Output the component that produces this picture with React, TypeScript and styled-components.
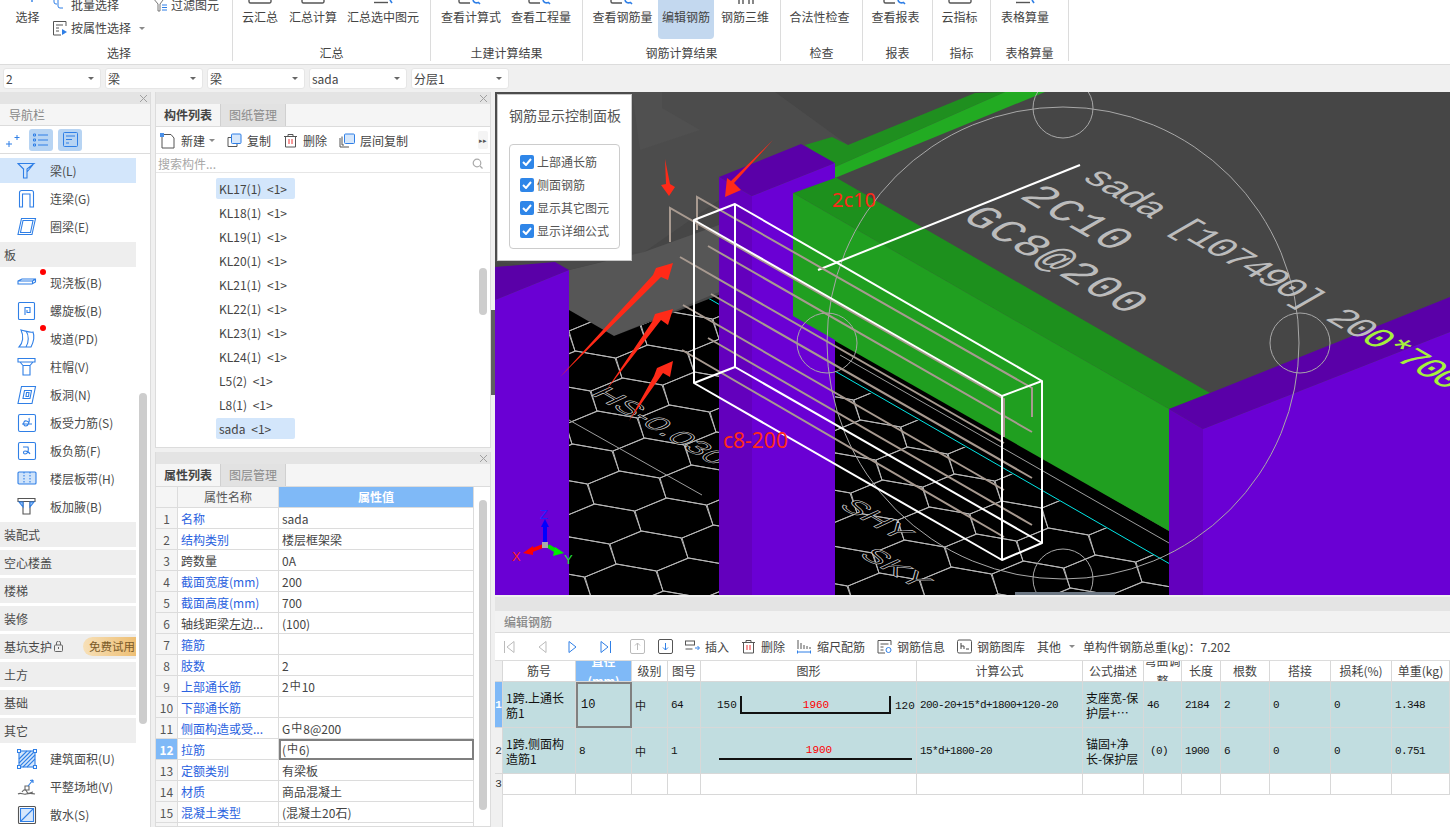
import React from "react";
import styled, { createGlobalStyle } from "styled-components";

const Global = createGlobalStyle`
  html, body { margin: 0; padding: 0; overflow: hidden; background: #f0f0f0; }
  body { font-family: "Noto Sans CJK SC", "Noto Sans", "Liberation Sans", sans-serif; font-size: 12px; color: #444; }
  * { box-sizing: border-box; }
`;
const BLUE = "#2f7fe6";

const Page = styled.div`width: 1450px; height: 827px; display: flex; flex-direction: column; overflow: hidden; background: #f0f0f0;`;

/* ---------- ribbon ---------- */
const Ribbon = styled.div`height: 65px; flex: none; background: #fff; display: flex; align-items: flex-start; border-bottom: 1px solid #dcdcdc;`;
const Group = styled.div<{ $w: number }>`width: ${p => p.$w}px; height: 61px; flex: none; border-right: 1px solid #dcdcdc; display: flex; flex-direction: column;`;
const GroupBody = styled.div<{ $pl?: number; $gap?: number; $center?: boolean }>`
  height: 39px; display: flex; padding-left: ${p => p.$pl ?? 0}px; gap: ${p => p.$gap ?? 0}px;
  ${p => p.$center ? "justify-content: center; padding-right: 4px;" : ""}
`;
const GroupLabel = styled.div<{ $pl?: number }>`height: 22px; line-height: 28px; text-align: center; font-size: 12px; color: #444; padding-left: ${p => p.$pl ?? 0}px;`;
const RibbonBtn = styled.div<{ $w: number; $active?: boolean }>`
  width: ${p => p.$w}px; height: 39px; flex: none; display: flex; flex-direction: column; align-items: center;
  border-radius: 0 0 4px 4px; background: ${p => p.$active ? "#c3d8ef" : "transparent"};
  white-space: nowrap; color: #444;
  svg { flex: none; display: block; }
  span { margin-top: 4px; line-height: 16px; }
`;
const SelectCols = styled.div`display: flex; height: 39px;`;
const SmallCol = styled.div<{ $w: number; $ml?: number }>`width: ${p => p.$w}px; margin-left: ${p => p.$ml ?? 0}px; display: flex; flex-direction: column; gap: 7px; margin-top: -3px;`;
const SmallBtn = styled.div`display: flex; align-items: center; gap: 3px; height: 16px; line-height: 16px; white-space: nowrap; color: #444;`;

type TopKind = "bar" | "search" | "blue" | "ticks" | "arrow" | "tick" | "none";
const TopIcon = ({ kind }: { kind: TopKind }) => (
  <svg width="34" height="5" viewBox="0 0 34 5">
    {kind === "bar" && <path d="M6 0v1.500a1.500 1.500 0 0 0 1.500 1.500h19a1.500 1.500 0 0 0 1.500-1.500V0" fill="none" stroke="#555" strokeWidth="1.400" />}
    {kind === "search" && <><path d="M5 0v1.500A1.500 1.500 0 0 0 6.500 3H16" fill="none" stroke="#555" strokeWidth="1.400" /><path d="M19 0a3.500 3.500 0 0 0 5 2.500M24 2l2 2" fill="none" stroke={BLUE} strokeWidth="1.600" /></>}
    {kind === "blue" && <><path d="M8 2.500h14" stroke="#555" strokeWidth="1.400" /><path d="M24 0l2 3" stroke={BLUE} strokeWidth="1.600" /></>}
    {kind === "ticks" && <path d="M11 0v4M15 0v4M21 0v4M25 0v4" stroke="#555" strokeWidth="1.400" />}
    {kind === "arrow" && <path d="M7 1h14M23 4l4-4" stroke="#555" strokeWidth="1.400" />}
    {kind === "tick" && <path d="M21 0v2" stroke={BLUE} strokeWidth="1.400" />}
  </svg>
);

const Rb = ({ t, w, k, active }: { t: string; w: number; k: TopKind; active?: boolean }) => (
  <RibbonBtn $w={w} $active={active}><TopIcon kind={k} /><span>{t}</span></RibbonBtn>
);

const Caret = styled.i<{ $c?: string; $ml?: number }>`
  display: inline-block; width: 0; height: 0; border-left: 3px solid transparent; border-right: 3px solid transparent;
  border-top: 3px solid ${p => p.$c ?? "#8a8a8a"}; flex: none; margin-left: ${p => p.$ml ?? 0}px;
`;

/* ---------- selector row ---------- */
const SelectBar = styled.div`height: 27px; flex: none; display: flex; gap: 4px; padding: 3px 0 0 3px; background: #f0f0f0;`;
const Select = styled.div`
  width: 98px; height: 21px; background: #fff; border: 1px solid #e6e6e6; border-radius: 3px; display: flex; align-items: center;
  justify-content: space-between; padding: 0 6px 0 2px; font-size: 12px; line-height: 19px; color: #444;
`;

/* ---------- main ---------- */
const Main = styled.div`flex: 1; min-height: 0; display: flex;`;
const Strip = styled.div<{ $h?: number }>`
  height: ${p => p.$h ?? 12}px; flex: none; background: #e4e4e4; display: flex; align-items: center; justify-content: flex-end; padding-right: 2px;
  svg { display: block; }
`;
const CloseX = () => (
  <svg width="9" height="9" viewBox="0 0 9 9"><path d="M1 1l7 7M8 1L1 8" stroke="#a0a0a0" strokeWidth="1" /></svg>
);

/* nav */
const Nav = styled.div`width: 151px; flex: none; background: #fff; border-right: 1px solid #dcdcdc; display: flex; flex-direction: column; overflow: hidden;`;
const PanelTitle = styled.div`height: 22px; flex: none; line-height: 22px; padding-left: 9px; background: #f5f5f5; color: #888; border-bottom: 1px solid #dcdcdc; font-size: 12px;`;
const NavTools = styled.div`height: 28px; flex: none; display: flex; align-items: center; padding-left: 6px; gap: 5px; border-bottom: 1px solid #dcdcdc;`;
const ToolToggle = styled.div<{ $on?: boolean }>`
  width: 24px; height: 22px; border-radius: 3px; display: flex; align-items: center; justify-content: center;
  background: ${p => p.$on ? "#b7d4f3" : "transparent"};
`;
const NavList = styled.div`flex: 1; min-height: 0; position: relative; padding-top: 4px; width: 150px; overflow: hidden;`;
const NavRow = styled.div<{ $active?: boolean; $cat?: boolean }>`
  width: 136px; height: 25px; margin-bottom: 3px; display: flex; align-items: center; position: relative; font-size: 12px; line-height: 25px; white-space: nowrap;
  background: ${p => p.$active ? "#d3e6fb" : p.$cat ? "#eeeeee" : "transparent"};
  padding-left: ${p => p.$cat ? 4 : 17}px; color: #4a4a4a;
`;
const NavLabel = styled.span`margin-left: 13px;`;
const Dot = styled.i`position: absolute; left: 40px; top: -1px; width: 6px; height: 6px; border-radius: 50%; background: #f00;`;
const Trial = styled.div`
  position: absolute; right: 0; top: 3px; width: 53px; height: 19px; line-height: 19px; text-align: right; padding-right: 1px;
  border-radius: 10px 0 0 10px; background: linear-gradient(90deg, #f7e0b8, #eebf74); color: #7a5a28; font-size: 11.5px;
`;
const Thumb = styled.div<{ $x: number; $y: number; $h: number; $w?: number }>`
  position: absolute; left: ${p => p.$x}px; top: ${p => p.$y}px; width: ${p => p.$w ?? 8}px; height: ${p => p.$h}px; background: #cdcdcd; border-radius: 4px;
`;

const navIcons: Record<string, React.ReactNode> = {
  beam: <path d="M1 2.500h16L10 8v9H6.500V8zM1 2.500l6 6M17 2.500L10 11" />,
  lintel: <path d="M2.500 18V3.500a2 2 0 0 1 2-2h10a2 2 0 0 1 2 2V18h-3.500V5h-7.500v13z" />,
  ring: <path d="M4.500 1.500h14l-3.500 16H1zM6 3.500h10l-2.500 12H3.500z" />,
  slab: <path d="M1 8l4-2h13.500v3L15 11H1zM1 8h14.500v3M15.500 8l3-2" />,
  spiral: <><rect x="1.500" y="1.500" width="16" height="17" rx="1" /><path d="M8 14V6.500h5v5H10V9" /></>,
  ramp: <path d="M4 1c5 1 9 3 12 2 2 5 0 11-2 15H2c4-4 5-11 2-17zM9 2c3 4 3 11 0 16" />,
  cap: <path d="M1 1.500h17v3.500H1zM3 5l3 3.500h7L16 5M6 8.500h7V18H6z" />,
  hole: <><path d="M4.500 1.500h14l-3.500 17H1z" /><path d="M7.500 5.500h7l-1.500 8H6zM9.500 7.500h2.500l-.5 4H9z" /></>,
  rebarS: <><rect x="1.500" y="1.500" width="17" height="17" rx="1.500" /><path d="M5 11h10M12 5c1 4-1 8-3 8s-3-2-2-4 4-1 5 1" /></>,
  rebarF: <><rect x="1.500" y="1.500" width="17" height="17" rx="1.500" /><path d="M6 6h5c1 3 0 7-3 7-2 0-2-3 0-3s4 1 5 3" /></>,
  band: <><rect x="1" y="3" width="18" height="12" rx="1" fill="#cfe3fa" /><path d="M7 3v12M13 3v12" strokeDasharray="1.500 1.500" /></>,
  haunch: <g stroke="#555"><path d="M1 1.500h17v3H1zM6 4.500h7V17H6z" /><path d="M2 5l4 5V5zM17 5l-4 5V5z" fill="#9cc4f2" stroke={BLUE} /></g>,
  area: <><rect x="2" y="2" width="16" height="16" fill="#d6e7fb" /><path d="M2 10l8-8M2 18L18 2M10 18l8-8M2 14l12-12M6 18l12-12" /><path d="M0.500 0.500h3v3h-3zM16.500 0.500h3v3h-3zM0.500 16.500h3v3h-3zM16.500 16.500h3v3h-3z" fill="#fff" /></>,
  site: <g stroke="#666"><path d="M5 15c2-3 4-3 5 0s4 0 6 0" /><path d="M1 17c3-2 5 1 8 0s5-1 9 0" /><path d="M8 9h4v4H8z" /><path d="M11 9l5-6M16 3l-3 .5M16 3v3" stroke={BLUE} /></g>,
  apron: <><rect x="1.500" y="1.500" width="17" height="17" rx="1" stroke="#555" /><path d="M3.500 3.500h13v13h-13z" fill="#d6e7fb" /><path d="M3.500 16.500l13-13" /></>,
};
const NavIcon = ({ k }: { k: string }) => (
  <svg width="20" height="20" viewBox="0 0 20 20" fill="none" stroke={BLUE} strokeWidth="1.100" style={{ flex: "none" }}>{navIcons[k]}</svg>
);

const navData: { t: string; k?: string; dot?: boolean; active?: boolean; trial?: boolean }[] = [
  { t: "梁(L)", k: "beam", active: true }, { t: "连梁(G)", k: "lintel" }, { t: "圈梁(E)", k: "ring" },
  { t: "板" }, { t: "现浇板(B)", k: "slab", dot: true }, { t: "螺旋板(B)", k: "spiral" }, { t: "坡道(PD)", k: "ramp", dot: true },
  { t: "柱帽(V)", k: "cap" }, { t: "板洞(N)", k: "hole" }, { t: "板受力筋(S)", k: "rebarS" }, { t: "板负筋(F)", k: "rebarF" },
  { t: "楼层板带(H)", k: "band" }, { t: "板加腋(B)", k: "haunch" },
  { t: "装配式" }, { t: "空心楼盖" }, { t: "楼梯" }, { t: "装修" }, { t: "基坑支护", trial: true }, { t: "土方" }, { t: "基础" }, { t: "其它" },
  { t: "建筑面积(U)", k: "area" }, { t: "平整场地(V)", k: "site" }, { t: "散水(S)", k: "apron" },
];

/* middle */
const Middle = styled.div`width: 336px; margin-left: 4px; flex: none; display: flex; flex-direction: column; gap: 4px;`;
const Panel = styled.div<{ $h?: number }>`
  ${p => p.$h ? `height: ${p.$h}px; flex: none;` : "flex: 1; min-height: 0;"}
  background: #fff; display: flex; flex-direction: column; position: relative; overflow: hidden; border: 1px solid #dcdcdc; border-top: 0;
`;
const Tabs = styled.div`height: 23px; flex: none; display: flex; background: #f5f5f5; border-bottom: 1px solid #dcdcdc;`;
const Tab = styled.div<{ $on?: boolean }>`
  width: 65px; text-align: center; line-height: 22px; font-size: 12px; font-weight: ${p => p.$on ? 700 : 400};
  color: ${p => p.$on ? "#444" : "#8c8c8c"}; background: ${p => p.$on ? "#f5f5f5" : "#e2e2e2"}; border-right: 1px solid #d0d0d0;
`;
const ListTools = styled.div`height: 27px; flex: none; display: flex; align-items: center; padding: 1px 0 0 4px; gap: 12px; border-bottom: 1px solid #e6e6e6; position: relative;`;
const ToolItem = styled.div<{ $gap?: number }>`display: flex; align-items: center; gap: ${p => p.$gap ?? 5}px; white-space: nowrap; font-size: 12px; color: #444; line-height: 16px; svg { flex: none; display: block; }`;
const More = styled.div`position: absolute; right: 2px; top: 4px; width: 10px; height: 18px; background: #f4f4f4; border-radius: 2px; text-align: center; line-height: 18px; font-size: 7px; color: #555;`;
const Search = styled.div`height: 19px; flex: none; display: flex; align-items: center; justify-content: space-between; padding: 0 7px 0 2px; color: #a8a8a8; font-size: 12px; border-bottom: 1px solid #e6e6e6;`;
const CompList = styled.div`flex: 1; min-height: 0; padding: 5px 0 0 60px; display: flex; flex-direction: column; gap: 3px;`;
const CompItem = styled.div<{ $on?: boolean }>`
  width: ${p => p.$on ? 79 : 85}px; height: 21px; line-height: 21px; padding-left: 3px; border-radius: 2px; font-size: 12px; white-space: pre; word-spacing: 3px; color: #444;
  background: ${p => p.$on ? "#d3e6fb" : "transparent"};
`;
const PropGrid = styled.div`width: 318px; display: grid; grid-template-columns: 22px 101px 195px; flex: none;`;
const PropHead = styled.div<{ $on?: boolean }>`
  height: 21px; line-height: 20px; text-align: center; font-size: 12px; border: solid #dcdcdc; border-width: 0 1px 1px 0;
  background: ${p => p.$on ? "#7fb9f7" : "#f5f5f5"}; color: ${p => p.$on ? "#fff" : "#555"}; font-weight: ${p => p.$on ? 700 : 400};
`;
const PropNum = styled.div<{ $on?: boolean }>`
  height: 21px; line-height: 21px; text-align: center; font-size: 12px; border: solid #dcdcdc; border-width: 0 1px 1px 0;
  background: ${p => p.$on ? "#7fb9f7" : "#f5f5f5"}; color: ${p => p.$on ? "#fff" : "#555"}; font-weight: ${p => p.$on ? 700 : 400};
`;
const PropName = styled.div<{ $link?: boolean }>`
  height: 21px; line-height: 21px; padding-left: 3px; white-space: nowrap; overflow: hidden; font-size: 12px; border: solid #dcdcdc; border-width: 0 1px 1px 0;
  color: ${p => p.$link ? "#2a62e0" : "#444"};
`;
const PropVal = styled.div<{ $sel?: boolean }>`
  height: 21px; line-height: ${p => p.$sel ? 18 : 21}px; padding-left: ${p => p.$sel ? 1 : 3}px; white-space: nowrap; font-size: 12px; color: #444;
  border: solid #dcdcdc; border-width: 0 1px 1px 0;
  ${p => p.$sel ? "border: 2px solid #7f7f7f;" : ""}
`;
const Sym = styled.span`font-size: 11px; position: relative; top: -2px; margin: 0 1px;`;
const GradeSym = styled.span`font-size: 11px;`;

/* right */
const Right = styled.div`width: 955px; margin-left: 4px; flex: none; display: flex; flex-direction: column; position: relative;`;
const Viewport = styled.div`height: 503px; flex: none; position: relative; background: #464646; overflow: hidden; svg.scene { display: block; }`;
const Splitter = styled.div`position: absolute; left: -4px; top: 218px; width: 4px; height: 85px; background: #5f5f5f;`;
const CtrlPanel = styled.div`
  position: absolute; left: 2px; top: 2px; width: 135px; height: 167px; background: #fff; border: 1px solid #c8c8c8; padding: 10px 12px 0 11px;
`;
const CtrlTitle = styled.div`font-size: 14px; line-height: 20px; color: #555; white-space: nowrap; letter-spacing: 0;`;
const CtrlBox = styled.div`margin-top: 19px; width: 111px; height: 105px; border: 1px solid #ccc; border-radius: 4px; padding: 10px 0 0 10px; display: flex; flex-direction: column; gap: 9px;`;
const CtrlRow = styled.label`display: flex; align-items: center; gap: 3px; height: 14px; font-size: 12px; line-height: 14px; color: #555; white-space: nowrap;`;
const CheckBox = styled.span`width: 14px; height: 14px; border-radius: 2px; background: #2f86e8; display: flex; align-items: center; justify-content: center; flex: none;`;
const Handle = styled.div`position: absolute; left: 520px; bottom: 0; width: 100px; height: 3px; background: #6c7783;`;

/* rebar editor */
const Editor = styled.div`flex: 1; min-height: 0; background: #fff; display: flex; flex-direction: column; margin-top: 2px; position: relative; overflow: hidden;`;
const EdTitle = styled.div`height: 22px; flex: none; line-height: 22px; padding-left: 9px; background: #f2f2f2; color: #888; font-size: 12px; font-weight: 500; border-bottom: 1px solid #dcdcdc;`;
const EdTools = styled.div`height: 27px; flex: none; display: flex; align-items: center; white-space: nowrap;`;
const PagerBtn = styled.div<{ $w: number }>`width: ${p => p.$w}px; height: 18px; display: flex; align-items: center; justify-content: center; flex: none; svg { display: block; }`;
const EdItems = styled.div`display: flex; align-items: center; gap: 12px; margin-left: 2px;`;
const Total = styled.div`margin-left: -4px; font-size: 12px; color: #444; line-height: 16px;`;
const cols = "8px 73px 56px 36px 33px 216px 166px 61px 38px 39px 49px 61px 61px 58px";
const Grid = styled.div`display: grid; grid-template-columns: ${cols}; grid-template-rows: 21px 46px 46px 21px; flex: none; border-top: 1px solid #dcdcdc;`;
const Cell = styled.div<{ $bg?: string; $sel?: boolean; $pl?: number; $head?: boolean; $center?: boolean }>`
  border: solid #d8d8d8; border-width: 0 1px 1px 0; overflow: hidden; display: flex; align-items: center; position: relative;
  background: ${p => p.$bg ?? "#fff"}; padding-left: ${p => p.$pl ?? 3}px;
  ${p => p.$center ? "justify-content: center; padding-left: 0; text-align: center;" : ""}
  ${p => p.$sel ? "border: 2px solid #808080;" : ""}
  font-size: 12px; color: ${p => p.$head ? "#444" : "#222"}; line-height: 14px;
`;
const HeadWrap = styled.div<{ $white?: boolean }>`text-align: center; line-height: 20px; color: ${p => p.$white ? "#fff" : "#444"}; font-weight: ${p => p.$white ? 700 : 400}; flex: none; width: 100%;`;
const Mono = styled.span<{ $size?: number }>`font-family: "Liberation Mono", monospace; font-size: ${p => p.$size ?? 11}px; letter-spacing: ${p => p.$size ? 0 : -0.6}px; color: #111; white-space: nowrap;`;
const RowNo = styled.span<{ $w?: boolean }>`font-family: "Liberation Mono", monospace; font-size: 11px; width: 8px; text-align: center; color: ${p => p.$w ? "#fff" : "#333"}; font-weight: ${p => p.$w ? 700 : 400};`;
const CellText = styled.div`font-size: 12px; line-height: 15px; color: #111; letter-spacing: 0;`;
const LeftFill = styled.div`position: absolute; left: 0; top: 197px; bottom: 0; width: 8px; background: #f0f0f0; border-right: 1px solid #dcdcdc;`;

const Stroke = styled.svg`flex: none;`;

const hexes = (() => {
  const v = [[-39, -7], [-7, -20], [32, -13], [39, 7], [8, 20], [-33, 13]];
  let d = "";
  for (let m = -12; m <= 14; m++) for (let n = -12; n <= 12; n++) {
    const cx = 627 + m * 47 - n * 25, cy = 491 + m * 27 + n * 33;
    if (cx < 520 || cx > 1220 || cy < 280 || cy > 640) continue;
    d += "M" + v.map(([x, y]) => `${cx + x} ${cy + y}`).join("L") + "Z";
  }
  return d;
})();

const Arrow = ({ pts }: { pts: string }) => <polygon points={pts} fill="#ff2a18" />;
const G1 = "#a89a90";

const Scene = () => (
  <svg className="scene" width="955" height="503" viewBox="495 92 955 503" fontFamily="Liberation Mono, monospace">
    <defs>
      <clipPath id="floor">
        <polygon points="569,310 614,336 719,295 719,595 569,595" />
        <polygon points="835,338 1169,531 1169,595 835,595" />
      </clipPath>
      <clipPath id="mesh">
        <polygon points="569,310 614,336 719,295 719,595 569,595" />
        <polygon points="835,373 1169,564 1169,595 835,595" />
      </clipPath>
    </defs>
    <rect x="495" y="92" width="955" height="503" fill="#464646" />
    <polygon points="495,92 775,92 848,145 719,200 640,255 495,262" fill="#4c4c4c" />
    <polygon points="632,92 662,92 662,108 700,130 640,150" fill="#505050" />
    <polygon points="569,270 644,252 719,225 719,292 614,336 569,310" fill="#565656" />
    <polygon points="495,262 640,252 569,270" fill="#4a4a4a" />
    <polygon points="569,310 614,336 719,295 719,595 569,595" fill="#000" />
    <polygon points="835,338 1169,531 1169,595 835,595" fill="#000" />
    <g clipPath="url(#mesh)">
      <path d={hexes} fill="none" stroke="#b8b8b8" strokeWidth="1" />
      <g stroke="#d8d8d8" strokeWidth=".8" fontSize="34" fontFamily="Liberation Sans, sans-serif" fill="#000">
        <text transform="matrix(.866 .5 -.75 .35 590 394)">HS-0.030</text>
        <text transform="matrix(.866 .5 -.75 .35 838 506)">SHY</text>
        <text transform="matrix(.866 .5 -.75 .35 858 555)">SKY</text>
      </g>
    </g>
    <g clipPath="url(#floor)">
      <path d="M708 298L1170 564" stroke="#00e5e5" strokeWidth="1" />
      <path d="M569 420L702 495M840 355L1169 543" stroke="#9c9c9c" strokeWidth="1" />
    </g>
    {/* green */}
    <polygon points="805,145 832,137 848,145 975,93 1005,92 835,167" fill="#1f8f1f" />
    <polygon points="835,167 1005,92 1045,92 835,178" fill="#22ab22" />
    <polygon points="793,193 835,177 1210,393 1169,409" fill="#1d901d" />
    <polygon points="793,193 1169,409 1169,531 793,317" fill="#209f20" />
    {/* purple */}
    <polygon points="719,177 801,144 835,163 752,196" fill="#5a00a8" />
    <polygon points="719,177 752,196 752,595 719,595" fill="#6300bd" />
    <polygon points="752,196 835,163 835,178 793,193 793,316 835,340 835,595 752,595" fill="#6a00d4" />
    <polygon points="495,267 555,262 569,270 495,300" fill="#5a00a8" />
    <polygon points="495,300 569,270 569,595 495,595" fill="#6a00d4" />
    <polygon points="1169,409 1210,393 1450,297 1450,332 1203,429" fill="#5a00a8" />
    <polygon points="1169,409 1203,429 1203,595 1169,595" fill="#6300bd" />
    <polygon points="1203,429 1450,332 1450,595 1203,595" fill="#6a00d4" />
    {/* circles */}
    <g fill="none" stroke="#a8a8a8" strokeWidth="1">
      <circle cx="1063" cy="343" r="236" />
      <circle cx="1063" cy="108" r="30" />
      <circle cx="1300" cy="343" r="30" />
      <circle cx="1063" cy="579" r="30" />
      <circle cx="827" cy="343" r="30" />
    </g>
    {/* slab text */}
    <g fill="#bcbcbc">
      <text transform="matrix(.866 .5 -.866 .5 1080 178)" fontSize="38" letterSpacing="-2.700">sada [107490] 20<tspan fill="#a6f03c">0*700</tspan></text>
      <text transform="matrix(.866 .5 -.866 .5 1018 197)" fontSize="44" letterSpacing="1.500">2C10</text>
      <text transform="matrix(.866 .5 -.866 .5 960 218)" fontSize="44" letterSpacing="1.500">GC8@200</text>
    </g>
    <path d="M818 270L1080 165" stroke="#fff" strokeWidth="2" />
    {/* rebars */}
    <g fill="none" stroke={G1} strokeWidth="2">
      <path d="M697 230V197L1032 388V417" />
      <path d="M670 242V208L1004 399V437" />
      <path d="M708 246L1032 432M680 257L1004 443M711 294L1032 478M683 305L1004 490M708 338L1032 525M682 350L1004 537" />
    </g>
    {/* wireframe */}
    <g fill="none" stroke="#fff" strokeWidth="2" strokeLinejoin="round">
      <path d="M694 220L735 204L1042 381L1002 396ZM694 220V383L1002 560V396M735 204V367L1042 543V381M694 383L735 367M1002 560L1042 543" />
    </g>
    {/* arrows */}
    <Arrow pts="665,159 670,184 675,187 669,196 661,185 666,184" />
    <Arrow pts="773,140 734,183 741,190 725,197 727,178 731,181" />
    <Arrow pts="560,377 653,275 656,268 673,263 668,280 661,277" />
    <Arrow pts="605,392 652,322 655,314 673,309 668,325 661,320" />
    <Arrow pts="629,421 654,376 657,368 673,361 670,377 663,373" />
    <text x="832" y="207" fill="#ff2a18" fontSize="20" fontFamily="Noto Sans, sans-serif">2c10</text>
    <text x="723" y="448" fill="#ff2a18" fontSize="21" fontFamily="Noto Sans, sans-serif">c8-200</text>
    {/* axis */}
    <path d="M545 542V525" stroke="#0000ff" strokeWidth="4" />
    <path d="M541 527L545 519L549 527Z" fill="#0000ff" />
    <path d="M543 546L530 551" stroke="#f00" strokeWidth="4" />
    <path d="M533 546L523 553L533 555Z" fill="#f00" />
    <path d="M548 546L558 552" stroke="#00e000" strokeWidth="4" />
    <path d="M555 547L564 553L553 556Z" fill="#00ee00" />
    <rect x="542" y="542" width="6" height="6" fill="#aaa" />
    <text x="540" y="519" fill="#2020ff" fontSize="13" fontFamily="Liberation Sans, sans-serif">Z</text>
    <text x="512" y="561" fill="#ff2020" fontSize="13" fontFamily="Liberation Sans, sans-serif">X</text>
    <text x="564" y="564" fill="#20e040" fontSize="13" fontFamily="Liberation Sans, sans-serif">Y</text>
  </svg>
);

const I = {
  doc: <svg width="16" height="16" viewBox="0 0 16 16" fill="none" stroke="#555"><path d="M2 3v12h12V5l-3-3.500H4" /><path d="M0 0h4v4H0z" fill="#4a90e8" stroke="none" /></svg>,
  copy: <svg width="15" height="15" viewBox="0 0 15 15" fill="none"><path d="M1 4.500h3M1 4.500v9h9v-3" stroke="#555" /><rect x="4.500" y="1" width="9.500" height="9.500" rx="1" fill="#d6e7fb" stroke={BLUE} /></svg>,
  del: <svg width="15" height="15" viewBox="0 0 15 15" fill="none" stroke="#555"><path d="M1 3.500h13M5 3.500V1.500h5v2M2.500 3.500V14h10V3.500" /><path d="M6 6v5M9 6v5" stroke="#e33" /></svg>,
  floorCopy: <svg width="16" height="15" viewBox="0 0 16 15" fill="none"><path d="M1 5v9h9M3 3.500v8.500h2" stroke="#555" /><rect x="5.500" y="1" width="10" height="9.500" rx="1" fill="#d6e7fb" stroke={BLUE} /></svg>,
  insert: <svg width="15" height="15" viewBox="0 0 15 15" fill="none" stroke="#555"><rect x=".5" y="2" width="9" height="4" /><path d="M.5 10h7" /><path d="M10 9h4M12.500 7l2 2-2 2" stroke={BLUE} /></svg>,
  scale: <svg width="15" height="15" viewBox="0 0 15 15" fill="none" stroke="#555"><path d="M1 1v9M4 4v6M7 6v4M10 7v3M13 8v2" /><path d="M0 13h14M.5 11.500v3M13.500 11.500v3" stroke={BLUE} /></svg>,
  info: <svg width="15" height="15" viewBox="0 0 15 15" fill="none" stroke="#555"><path d="M14 6V1.500H1V14h7" /><path d="M3.500 5h8M3.500 8h3M3.500 11h3" /><circle cx="11.500" cy="11" r="2.500" stroke={BLUE} /></svg>,
  lib: <svg width="15" height="15" viewBox="0 0 15 15" fill="none" stroke="#555"><rect x=".5" y="1" width="14" height="13" rx="1.500" /><path d="M4 4v6M4 7h3v3M9 10h3" stroke="#444" /></svg>,
};

const Pager = ({ d, c }: { d: string; c: string }) => (
  <svg width="13" height="14" viewBox="0 0 13 14" fill="none" stroke={c} strokeWidth="1"><path d={d} /></svg>
);
const BoxIcon = ({ c, dir }: { c: string; dir: "up" | "down" }) => (
  <svg width="15" height="15" viewBox="0 0 15 15" fill="none" stroke={c}><rect x=".5" y=".5" width="14" height="14" rx="1.500" /><path d={dir === "up" ? "M7.500 11V4M5 6.500l2.500-2.500 2.500 2.500" : "M7.500 4v7M5 8.500l2.500 2.500 2.500-2.500"} stroke={dir === "up" ? c : BLUE} /></svg>
);

const props: { n: string; v: React.ReactNode; l?: boolean }[] = [
  { n: "名称", v: "sada", l: true }, { n: "结构类别", v: "楼层框架梁", l: true }, { n: "跨数量", v: "0A" },
  { n: "截面宽度(mm)", v: "200", l: true }, { n: "截面高度(mm)", v: "700", l: true }, { n: "轴线距梁左边...", v: "(100)" },
  { n: "箍筋", v: "", l: true }, { n: "肢数", v: "2", l: true }, { n: "上部通长筋", v: <>2<Sym>中</Sym>10</>, l: true },
  { n: "下部通长筋", v: "", l: true }, { n: "侧面构造或受...", v: <>G<Sym>中</Sym>8@200</>, l: true },
  { n: "拉筋", v: <>(<Sym>中</Sym>6)</>, l: true }, { n: "定额类别", v: "有梁板", l: true }, { n: "材质", v: "商品混凝土", l: true },
  { n: "混凝土类型", v: "(混凝土20石)", l: true },
];
const comps = ["KL17(1)", "KL18(1)", "KL19(1)", "KL20(1)", "KL21(1)", "KL22(1)", "KL23(1)", "KL24(1)", "L5(2)", "L8(1)", "sada"];
const heads: [string, boolean?][] = [["筋号"], ["直径(mm)", true], ["级别"], ["图号"], ["图形"], ["计算公式"], ["公式描述"], ["弯曲调整"], ["长度"], ["根数"], ["搭接"], ["损耗(%)"], ["单重(kg)"]];
const TEAL = "#c1dde0";

export default function App() {
  return (
    <Page>
      <Global />
      <Ribbon>
        <Group $w={233}>
          <GroupBody>
            <SelectCols>
              <Rb t="选择" w={55} k="tick" />
              <SmallCol $w={101} $ml={-3}>
                <SmallBtn>
                  <svg width="16" height="16" viewBox="0 0 16 16" fill="none" stroke={BLUE}><path d="M2 0v5a2 2 0 0 0 2 2h1M6 0v9a2 2 0 0 0 2 2h3" /></svg>
                  批量选择
                </SmallBtn>
                <SmallBtn>
                  <svg width="16" height="16" viewBox="0 0 16 16" fill="none" stroke="#555"><path d="M14 6V1.500H1.500V15H9" /><path d="M4 5h7M4 8h3M4 11h3" /><path d="M10 9l5 3-5 3z" fill={BLUE} stroke="none" /></svg>
                  按属性选择<Caret $ml={5} />
                </SmallBtn>
              </SmallCol>
              <SmallCol $w={70}>
                <SmallBtn>
                  <svg width="15" height="16" viewBox="0 0 15 16" fill="none" stroke="#777"><path d="M0 1l5 6v7h2V7l3-4" /><path d="M9 8h5M9 10.500h5M9 13h5" stroke={BLUE} /></svg>
                  过滤图元
                </SmallBtn>
              </SmallCol>
            </SelectCols>
          </GroupBody>
          <GroupLabel $pl={6}>选择</GroupLabel>
        </Group>
        <Group $w={198}>
          <GroupBody><Rb t="云汇总" w={54} k="bar" /><Rb t="汇总计算" w={52} k="bar" /><Rb t="汇总选中图元" w={88} k="blue" /></GroupBody>
          <GroupLabel>汇总</GroupLabel>
        </Group>
        <Group $w={152}>
          <GroupBody $pl={5}><Rb t="查看计算式" w={70} k="search" /><Rb t="查看工程量" w={70} k="search" /></GroupBody>
          <GroupLabel>土建计算结果</GroupLabel>
        </Group>
        <Group $w={198}>
          <GroupBody $pl={7} $gap={3}><Rb t="查看钢筋量" w={65} k="search" /><Rb t="编辑钢筋" w={56} k="none" active /><Rb t="钢筋三维" w={56} k="ticks" /></GroupBody>
          <GroupLabel>钢筋计算结果</GroupLabel>
        </Group>
        <Group $w={82}>
          <GroupBody $center><Rb t="合法性检查" w={70} k="none" /></GroupBody>
          <GroupLabel>检查</GroupLabel>
        </Group>
        <Group $w={70}>
          <GroupBody $center><Rb t="查看报表" w={60} k="search" /></GroupBody>
          <GroupLabel>报表</GroupLabel>
        </Group>
        <Group $w={58}>
          <GroupBody $center><Rb t="云指标" w={50} k="bar" /></GroupBody>
          <GroupLabel>指标</GroupLabel>
        </Group>
        <Group $w={78}>
          <GroupBody $pl={9}><Rb t="表格算量" w={50} k="blue" /></GroupBody>
          <GroupLabel>表格算量</GroupLabel>
        </Group>
      </Ribbon>

      <SelectBar>
        {["2", "梁", "梁", "sada", "分层1"].map((s, i) => (
          <Select key={i}><span>{s}</span><Caret $c="#666" /></Select>
        ))}
      </SelectBar>

      <Main>
        <Nav>
          <Strip><CloseX /></Strip>
          <PanelTitle>导航栏</PanelTitle>
          <NavTools>
            <svg width="16" height="16" viewBox="0 0 16 16" fill="none" stroke={BLUE} style={{ marginRight: 2 }}><path d="M3 9v6M0 12h6M11 3v5M8.500 5.500h5" /></svg>
            <ToolToggle $on><svg width="16" height="14" viewBox="0 0 16 14" fill="none" stroke={BLUE}><path d="M5 2h10M5 7h10M5 12h10" /><path d="M.5 1h2v2h-2zM.5 6h2v2h-2zM.5 11h2v2h-2z" /></svg></ToolToggle>
            <ToolToggle $on><svg width="15" height="15" viewBox="0 0 15 15" fill="none" stroke={BLUE}><rect x=".5" y=".5" width="14" height="14" rx="1" /><path d="M3 4h9M3 7.500h6M3 11h3" /></svg></ToolToggle>
          </NavTools>
          <NavList>
            {navData.map((d, i) => (
              <NavRow key={i} $active={d.active} $cat={!d.k}>
                {d.k ? <><NavIcon k={d.k} /><NavLabel>{d.t}</NavLabel></> : d.t}
                {d.dot && <Dot />}
                {d.trial && <>
                  <svg width="9" height="11" viewBox="0 0 9 11" fill="none" stroke="#666" style={{ marginLeft: 2 }}><rect x=".5" y="4" width="8" height="6.500" rx="1" /><path d="M2.500 4V2a2 2 0 0 1 4 0v2M4.500 6v2" /></svg>
                  <Trial>免费试用</Trial>
                </>}
              </NavRow>
            ))}
            <Thumb $x={139} $y={239} $h={331} />
          </NavList>
        </Nav>

        <Middle>
          <Panel $h={356}>
            <Strip><CloseX /></Strip>
            <Tabs><Tab $on>构件列表</Tab><Tab>图纸管理</Tab></Tabs>
            <ListTools>
              <ToolItem>{I.doc}新建<Caret $ml={-1} /></ToolItem>
              <ToolItem>{I.copy}复制</ToolItem>
              <ToolItem>{I.del}删除</ToolItem>
              <ToolItem>{I.floorCopy}层间复制</ToolItem>
              <More>▸▸</More>
            </ListTools>
            <Search>
              搜索构件...
              <svg width="11" height="11" viewBox="0 0 11 11" fill="none" stroke="#aaa" strokeWidth="1.200"><circle cx="5" cy="5" r="3.800" /><path d="M8 8l2.500 2.500" /></svg>
            </Search>
            <CompList>
              {comps.map((c, i) => (
                <CompItem key={c} $on={i === 0 || i === 10}>{c + " <1>"}</CompItem>
              ))}
            </CompList>
            <Thumb $x={323} $y={176} $h={47} />
          </Panel>
          <Panel>
            <Strip><CloseX /></Strip>
            <Tabs><Tab $on>属性列表</Tab><Tab>图层管理</Tab></Tabs>
            <PropGrid>
              <PropHead />
              <PropHead>属性名称</PropHead>
              <PropHead $on>属性值</PropHead>
              {props.map((p, i) => (
                <React.Fragment key={i}>
                  <PropNum $on={i === 11}>{i + 1}</PropNum>
                  <PropName $link={p.l}>{p.n}</PropName>
                  <PropVal $sel={i === 11}>{p.v}</PropVal>
                </React.Fragment>
              ))}
              <PropNum /><PropName /><PropVal />
            </PropGrid>
            <Thumb $x={323} $y={48} $h={310} />
          </Panel>
        </Middle>

        <Right>
          <Splitter />
          <Viewport>
            <Scene />
            <CtrlPanel>
              <CtrlTitle>钢筋显示控制面板</CtrlTitle>
              <CtrlBox>
                {["上部通长筋", "侧面钢筋", "显示其它图元", "显示详细公式"].map(t => (
                  <CtrlRow key={t}>
                    <CheckBox><svg width="10" height="8" viewBox="0 0 10 8" fill="none" stroke="#fff" strokeWidth="2"><path d="M1 4l3 3 5-6" /></svg></CheckBox>
                    {t}
                  </CtrlRow>
                ))}
              </CtrlBox>
            </CtrlPanel>
            <Handle />
          </Viewport>
          <Editor>
            <Strip $h={14} />
            <EdTitle>编辑钢筋</EdTitle>
            <EdTools>
              <PagerBtn $w={28}><Pager c="#bbb" d="M1.500 1v12M11 1.500L4 7l7 5.500z" /></PagerBtn>
              <PagerBtn $w={38}><Pager c="#bbb" d="M10 1.500L3 7l7 5.500z" /></PagerBtn>
              <PagerBtn $w={22}><Pager c={BLUE} d="M3 1.500L10 7l-7 5.500z" /></PagerBtn>
              <PagerBtn $w={44}><Pager c={BLUE} d="M11.500 1v12M2 1.500L9 7l-7 5.500z" /></PagerBtn>
              <PagerBtn $w={20}><BoxIcon c="#bbb" dir="up" /></PagerBtn>
              <PagerBtn $w={36}><BoxIcon c="#555" dir="down" /></PagerBtn>
              <EdItems>
                <ToolItem>{I.insert}插入</ToolItem>
                <ToolItem>{I.del}删除</ToolItem>
                <ToolItem>{I.scale}缩尺配筋</ToolItem>
                <ToolItem>{I.info}钢筋信息</ToolItem>
                <ToolItem>{I.lib}钢筋图库</ToolItem>
                <ToolItem $gap={8}>其他<Caret /></ToolItem>
                <Total>单构件钢筋总重(kg)：7.202</Total>
              </EdItems>
            </EdTools>
            <Grid>
              <Cell $bg="#f0f0f0" />
              {heads.map(([h, on]) => (
                <Cell key={h} $center $bg={on ? "#7fb9f7" : "#fff"} $head>
                  <HeadWrap $white={on}>{h}</HeadWrap>
                </Cell>
              ))}

              <Cell $bg="#7fb9f7" $pl={0}><RowNo $w>1</RowNo></Cell>
              <Cell $bg={TEAL}><CellText>1跨.上通长筋1</CellText></Cell>
              <Cell $bg={TEAL} $sel><Mono $size={12}>10</Mono></Cell>
              <Cell $bg={TEAL}><GradeSym>中</GradeSym></Cell>
              <Cell $bg={TEAL}><Mono>64</Mono></Cell>
              <Cell $bg={TEAL} $pl={0}>
                <Stroke width="216" height="45" viewBox="701 682 216 45" fontFamily="Liberation Mono, monospace" fontSize="11">
                  <text x="717" y="708" fill="#111">150</text>
                  <path d="M741 696V713H890V696" fill="none" stroke="#111" strokeWidth="2" />
                  <text x="816" y="708" fill="#f00" textAnchor="middle">1960</text>
                  <text x="895" y="709" fill="#111">120</text>
                </Stroke>
              </Cell>
              <Cell $bg={TEAL}><Mono>200-20+15*d+1800+120-20</Mono></Cell>
              <Cell $bg={TEAL}><CellText>支座宽-保护层+…</CellText></Cell>
              <Cell $bg={TEAL}><Mono>46</Mono></Cell>
              <Cell $bg={TEAL}><Mono>2184</Mono></Cell>
              <Cell $bg={TEAL}><Mono>2</Mono></Cell>
              <Cell $bg={TEAL}><Mono>0</Mono></Cell>
              <Cell $bg={TEAL}><Mono>0</Mono></Cell>
              <Cell $bg={TEAL}><Mono>1.348</Mono></Cell>

              <Cell $bg="#f0f0f0" $pl={0}><RowNo>2</RowNo></Cell>
              <Cell $bg={TEAL}><CellText>1跨.侧面构造筋1</CellText></Cell>
              <Cell $bg={TEAL}><Mono>8</Mono></Cell>
              <Cell $bg={TEAL}><GradeSym>中</GradeSym></Cell>
              <Cell $bg={TEAL}><Mono>1</Mono></Cell>
              <Cell $bg={TEAL} $pl={0}>
                <Stroke width="216" height="45" viewBox="701 728 216 45" fontFamily="Liberation Mono, monospace" fontSize="11">
                  <text x="819" y="753" fill="#f00" textAnchor="middle">1900</text>
                  <path d="M719 759H912" stroke="#111" strokeWidth="2" />
                </Stroke>
              </Cell>
              <Cell $bg={TEAL}><Mono>15*d+1800-20</Mono></Cell>
              <Cell $bg={TEAL}><CellText>锚固+净长-保护层</CellText></Cell>
              <Cell $bg={TEAL} $pl={6}><Mono>(0)</Mono></Cell>
              <Cell $bg={TEAL}><Mono>1900</Mono></Cell>
              <Cell $bg={TEAL}><Mono>6</Mono></Cell>
              <Cell $bg={TEAL}><Mono>0</Mono></Cell>
              <Cell $bg={TEAL}><Mono>0</Mono></Cell>
              <Cell $bg={TEAL}><Mono>0.751</Mono></Cell>

              <Cell $bg="#f0f0f0" $pl={0}><RowNo>3</RowNo></Cell>
              {Array.from({ length: 13 }).map((_, i) => <Cell key={i} />)}
            </Grid>
            <LeftFill />
          </Editor>
        </Right>
      </Main>
    </Page>
  );
}
